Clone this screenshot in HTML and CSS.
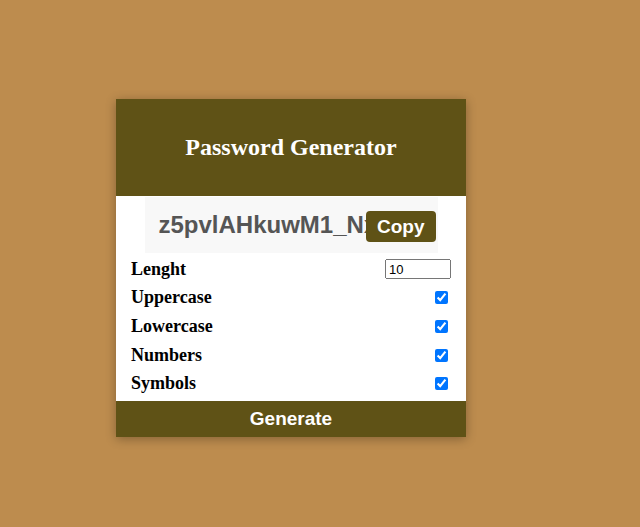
FILE: index.html
```html
<!DOCTYPE html>
<html>
<head>
<meta charset="utf-8">
<link rel="stylesheet" href="styles.css">
</head>
<body>
<div class="card">
  <div class="header"><h2 class="title">Password Generator</h2></div>
  <div class="result">
    <span class="result-text">z5pvlAHkuwM1_Nx</span>
    <button class="copy">Copy</button>
  </div>
  <div class="settings">
    <div class="row"><label>Lenght</label><input class="len" type="number" value="10"></div>
    <div class="row"><label>Uppercase</label><input type="checkbox" checked></div>
    <div class="row"><label>Lowercase</label><input type="checkbox" checked></div>
    <div class="row"><label>Numbers</label><input type="checkbox" checked></div>
    <div class="row"><label>Symbols</label><input type="checkbox" checked></div>
  </div>
  <button class="generate">Generate</button>
</div>
</body>
</html>
```
FILE: styles.css
```css
html, body { margin: 0; padding: 0; }
body {
  background: #bd8c4e;
  font-family: "Liberation Serif", "Times New Roman", serif;
  padding: 99px 0 0 116px;
  height: 527px;
  box-sizing: border-box;
}
.card {
  width: 350px;
  background: #fff;
  box-shadow: 0 2px 10px rgba(0,0,0,0.3);
}
.header {
  background: #5f5216;
  height: 97px;
  display: flex;
  align-items: center;
  justify-content: center;
}
.title {
  margin: 0;
  color: #fff;
  font-size: 24px;
  font-weight: bold;
}
.result {
  position: relative;
  width: 293px;
  height: 56px;
  margin: 1px auto 0;
  background: #f8f8f8;
  box-sizing: border-box;
  padding: 0 0 0 14px;
  display: flex;
  align-items: center;
  overflow: hidden;
  white-space: nowrap;
}
.result-text {
  font-family: "Liberation Sans", Arial, sans-serif;
  font-weight: bold;
  font-size: 24px;
  color: #555;
}
.copy {
  position: absolute;
  right: 2px;
  top: 14px;
  height: 31px;
  padding: 0 11px;
  border: none;
  border-radius: 4px;
  background: #5f5216;
  color: #fff;
  font-family: "Liberation Sans", Arial, sans-serif;
  font-weight: bold;
  font-size: 19px;
}
.settings {
  padding: 2px 15px 3px 15px;
}
.row {
  display: flex;
  justify-content: space-between;
  align-items: center;
  height: 28.6px;
}
.row label {
  font-size: 18px;
  font-weight: bold;
  color: #000;
}
.len {
  width: 66px;
  height: 20px;
  box-sizing: border-box;
  margin: 0;
  font-size: 13px;
  padding: 1px 2px;
}
.row input[type=checkbox] {
  margin: 3px 3px 3px 4px;
  width: 13px;
  height: 13px;
}
.generate {
  display: block;
  width: 100%;
  height: 36px;
  border: none;
  background: #5f5216;
  color: #fff;
  font-family: "Liberation Sans", Arial, sans-serif;
  font-weight: bold;
  font-size: 19px;
}
```
